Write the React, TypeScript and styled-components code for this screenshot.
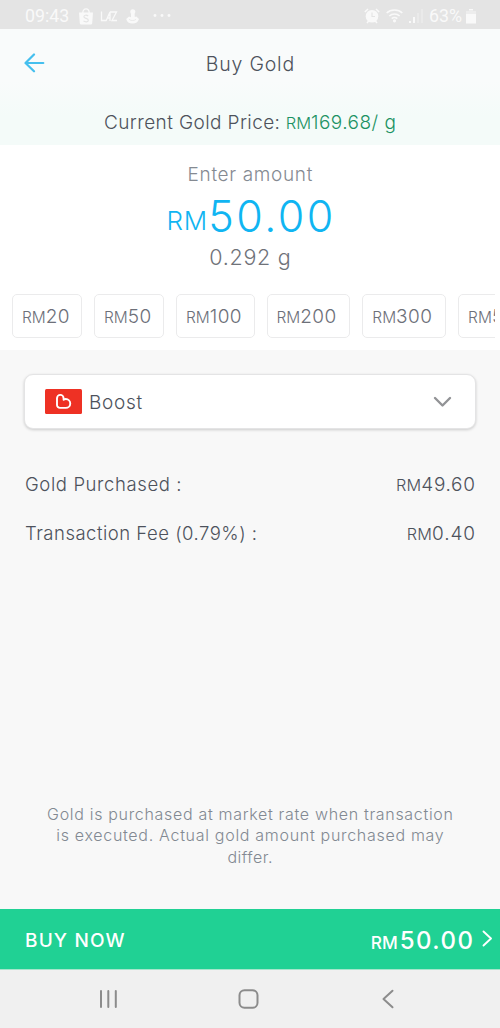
import React from "react";
import styled, { createGlobalStyle } from "styled-components";

const GlobalStyle = createGlobalStyle`
  * { box-sizing: border-box; }
  body {
    margin: 0;
    background: #f8f8f8;
    font-family: Inter, "Liberation Sans", sans-serif;
    color: #4d525c;
  }
  button { font: inherit; color: inherit; padding: 0; }
`;

const Screen = styled.div`
  width: 500px;
  height: 1028px;
  display: flex;
  flex-direction: column;
  overflow: hidden;
  background: #f8f8f8;
`;

const StatusBar = styled.div`
  height: 29px;
  flex: none;
  display: flex;
  align-items: center;
  justify-content: space-between;
  padding: 3px 24px 0 25px;
  background: #e4e4e4;
  color: #f9f9f9;
  font-family: Roboto, sans-serif;
  font-size: 17.8px;
  line-height: 26px;
`;

const StatusGroup = styled.div`
  display: flex;
  align-items: center;
`;

const StatusIcon = styled.svg<{ $gap: number }>`
  display: block;
  margin-left: ${(p) => p.$gap}px;
`;

const Header = styled.header`
  height: 116px;
  flex: none;
  background: linear-gradient(#f9fbfb, #f9fbfb 45%, #f4fbf9 75%);
`;

const TitleBar = styled.div`
  height: 70px;
  display: grid;
  grid-template-columns: 60px 1fr 60px;
  align-items: center;
`;

const BackButton = styled.button`
  border: 0;
  background: none;
  height: 40px;
  padding: 0 0 2px 24px;
  display: flex;
  align-items: center;
`;

const Txt = styled.span<{ $size: number; $track?: number; $weight?: number; $color?: string }>`
  font-size: ${(p) => p.$size}px;
  letter-spacing: ${(p) => p.$track ?? 0}px;
  margin-right: ${(p) => -(p.$track ?? 0)}px;
  font-weight: ${(p) => p.$weight ?? 300};
  color: ${(p) => p.$color ?? "inherit"};
  white-space: pre;
`;

const Title = styled.h1`
  margin: 0;
  padding-top: 1px;
  text-align: center;
  font-size: 19px;
  line-height: 26px;
  font-weight: 300;
`;

const PriceLine = styled.div`
  display: flex;
  align-items: baseline;
  padding-left: 104px;
  height: 46px;
  line-height: 48px;
`;

const MoneyRow = styled.span<{ $gap?: number; $color?: string; $raise?: number }>`
  display: inline-flex;
  align-items: baseline;
  gap: ${(p) => p.$gap ?? 0}px;
  color: ${(p) => p.$color ?? "inherit"};

  & > :first-child { padding-bottom: 0; margin-bottom: ${(p) => p.$raise ?? 0}px; transform: translateY(${(p) => -(p.$raise ?? 0)}px); }
`;

const AmountPanel = styled.section`
  height: 205px;
  flex: none;
  background: #fff;
  display: flex;
  flex-direction: column;
  align-items: center;
`;

const AmountLine = styled.div<{ $height: number; $top: number }>`
  height: ${(p) => p.$height}px;
  line-height: ${(p) => p.$height}px;
  margin-top: ${(p) => p.$top}px;
  flex: none;
`;

const ChipStrip = styled.div`
  width: 495px;
  align-self: flex-start;
  margin-top: 22px;
  padding-left: 12px;
  display: flex;
  gap: 12px;
  overflow: hidden;
`;

const Chip = styled.button<{ $width: number }>`
  flex: none;
  width: ${(p) => p.$width}px;
  height: 44px;
  border: 1px solid #ebebec;
  border-radius: 5px;
  background: #fff;
  color: #6d7079;
  padding-left: 9px;
  text-align: left;
  line-height: 44px;
`;

const Body = styled.main`
  flex: 1;
  display: flex;
  flex-direction: column;
  padding: 24px 24px 0;
`;

const WalletSelect = styled.button`
  height: 55px;
  flex: none;
  border: 1px solid #e4e4e5;
  border-radius: 9px;
  background: #fff;
  box-shadow: 0 1px 3px rgba(0, 0, 0, 0.18);
  display: flex;
  align-items: center;
  padding: 0 23.5px 0 20px;
`;

const WalletName = styled.span`
  flex: 1;
  text-align: left;
  padding: 2px 0 0 7px;
  line-height: 26px;
`;

const Details = styled.dl`
  margin: 31px 0 0;
  padding: 0 1px;
`;

const DetailRow = styled.div`
  height: 49px;
  line-height: 49px;
  display: flex;
  align-items: baseline;
  justify-content: space-between;
`;

const Term = styled.dt`
  margin: 0;
`;

const Value = styled.dd`
  margin: 0;
`;

const Note = styled.p`
  margin: auto 0 41px;
  line-height: 21.5px;
  color: #828992;
  display: flex;
  flex-direction: column;
  align-items: center;
`;

const BuyBar = styled.button`
  height: 61px;
  flex: none;
  border: 0;
  border-bottom: 1px solid #a6e6cc;
  background: #20d194;
  color: #fff;
  display: flex;
  align-items: center;
  justify-content: space-between;
  padding: 2px 7px 0 25px;
`;

const BuyTotal = styled.span`
  display: flex;
  align-items: center;
  gap: 9px;

  & > svg { margin-bottom: 4px; }
`;

const NavBar = styled.nav`
  height: 58px;
  flex: none;
  background: #f0f0f0;
  display: grid;
  grid-template-columns: 139.5px 144.5px auto;
  align-items: center;
  padding: 0 0 0 98px;
`;

type MoneyProps = {
  value: string;
  size: number;
  unit: number;
  track?: number;
  unitTrack?: number;
  weight?: number;
  color?: string;
  gap?: number;
  raise?: number;
};

function Money({ value, size, unit, track = 0, unitTrack = 0, weight, color, gap, raise }: MoneyProps) {
  return (
    <MoneyRow $gap={gap} $color={color} $raise={raise}>
      <Txt $size={unit} $track={unitTrack} $weight={weight}>RM</Txt>
      <Txt $size={size} $track={track} $weight={weight}>{value}</Txt>
    </MoneyRow>
  );
}

const chips = [
  { value: "20", width: 70 },
  { value: "50", width: 70 },
  { value: "100", width: 78.5 },
  { value: "200", width: 83.8 },
  { value: "300", width: 83.8 },
  { value: "500", width: 83.8 },
];

export default function App() {
  return (
    <Screen>
      <GlobalStyle />
      <StatusBar>
        <StatusGroup>
          <span>09:43</span>
          <StatusIcon $gap={9} width="16" height="17" viewBox="0 0 16 17">
            <path d="M1 4.5h14l-.8 10.8a1.3 1.3 0 0 1-1.3 1.2H3.100a1.300 1.300 0 0 1-1.300-1.200z" fill="#f9f9f9" />
            <path d="M4.800 5C4.800-.6 11.200-.6 11.200 5" fill="none" stroke="#f9f9f9" strokeWidth="1.300" />
            <path d="M10.200 8C8.500 6.700 5.900 7 5.900 8.700c0 2 4.400 1.300 4.400 3.500 0 1.900-3 2.200-4.800.7" fill="none" stroke="#e4e4e4" strokeWidth="1.200" />
          </StatusIcon>
          <StatusIcon $gap={6} width="18" height="11" viewBox="0 0 18 11" fill="none" stroke="#f9f9f9" strokeWidth="1.300">
            <path d="M1.500 .5v9H6M6 10 10 1v9M7.500 7h2.500M10 1h6.500L12 9.500h5" />
          </StatusIcon>
          <StatusIcon $gap={8} width="13" height="15" viewBox="0 0 13 15">
            <circle cx="6.800" cy="2.800" r="2.500" fill="#f9f9f9" />
            <path d="M5 4.500h3.600L8.800 8l1.600-.5L13 10c-1 3-3 4.500-6.500 4.500S1 13 .2 10L3 7.500l2 .7z" fill="#f9f9f9" />
            <path d="M3 10.300c1.500 1.500 5 1.700 7 .1" stroke="#e4e4e4" strokeWidth=".8" fill="none" />
          </StatusIcon>
          <StatusIcon $gap={14} width="18" height="4" viewBox="0 0 18 4" fill="#f9f9f9">
            <circle cx="2" cy="1.500" r="1.400" /><circle cx="9" cy="1.500" r="1.400" /><circle cx="16" cy="1.500" r="1.400" />
          </StatusIcon>
        </StatusGroup>
        <StatusGroup>
          <StatusIcon $gap={0} width="16" height="16" viewBox="0 0 16 16" stroke="#f9f9f9" fill="none">
            <circle cx="8" cy="8.200" r="6.300" fill="#f9f9f9" stroke="none" />
            <path d="M.8 4 4 1M15.200 4 12 1M3 15l2-2.500M13 15l-2-2.500" strokeWidth="1.500" />
            <path d="M8 4.500v4h3" stroke="#e4e4e4" strokeWidth="1.200" />
          </StatusIcon>
          <StatusIcon $gap={6} width="17" height="15" viewBox="0 0 17 15" stroke="#f9f9f9" fill="none" strokeWidth="1.600">
            <path d="M.7 4c4-4 11.600-4 15.600 0M3.300 7c3-2.700 7.400-2.700 10.400 0M5.700 9.600c1.500-1.300 4.100-1.300 5.600 0" />
            <circle cx="8.500" cy="11.800" r=".8" fill="#f9f9f9" />
          </StatusIcon>
          <StatusIcon $gap={5} width="15" height="14" viewBox="0 0 15 14" fill="#f9f9f9">
            <path d="M1 12h2v2H1zM5 8h2v6H5z" />
            <path d="M9 4h2v10H9zM13 0h2v14h-2z" opacity=".3" />
          </StatusIcon>
          <StatusIcon as="span" $gap={6}>63%</StatusIcon>
          <StatusIcon $gap={4} width="10" height="15" viewBox="0 0 10 15" fill="#f9f9f9">
            <path d="M3 0h4v2h3v12.500H0V2h3z" />
            <path d="M0 1h10v4H0z" fill="#e4e4e4" opacity=".6" />
          </StatusIcon>
        </StatusGroup>
      </StatusBar>

      <Header>
        <TitleBar>
          <BackButton aria-label="Back">
            <svg width="21" height="20" viewBox="0 0 21 20" fill="none" stroke="#45bfee" strokeWidth="2.200" strokeLinecap="round" strokeLinejoin="round">
              <path d="M10 1.500 1.500 10l8.500 8.300M2 10h17.300" />
            </svg>
          </BackButton>
          <Title><Txt $size={19.500} $track={0.8}>Buy Gold</Txt></Title>
        </TitleBar>
        <PriceLine>
          <Txt $size={19} $track={0.4}>{"Current Gold Price: "}</Txt>
          <Money value="169.68/ g" size={19} unit={16.5} track={0.45} color="#1b9263" />
        </PriceLine>
      </Header>

      <AmountPanel>
        <AmountLine $height={26} $top={17}>
          <Txt $size={19} $track={0.66} $color="#858a92">Enter amount</Txt>
        </AmountLine>
        <AmountLine $height={50} $top={3}>
          <Money value="50.00" size={43} unit={26} track={2.500} unitTrack={0.8} gap={1} raise={2} color="#10b5f2" />
        </AmountLine>
        <AmountLine $height={30} $top={1}>
          <Txt $size={21.500} $track={0.7} $color="#6f7279">0.292 g</Txt>
        </AmountLine>
        <ChipStrip>
          {chips.map((c) => (
            <Chip key={c.value} $width={c.width}>
              <Money value={c.value} size={19} unit={15.500} track={0.4} />
            </Chip>
          ))}
        </ChipStrip>
      </AmountPanel>

      <Body>
        <WalletSelect>
          <svg width="37" height="25" viewBox="0 0 37 25">
            <rect width="37" height="25" rx="1.500" fill="#ee3124" />
            <path d="M12 9.200a3.300 3.300 0 0 1 6.600 0v1.500c.6-.5 1.300-.7 2.200-.7a4.400 4.400 0 0 1 0 8.900H15a3 3 0 0 1-3-3z" fill="none" stroke="#fff" strokeWidth="1.900" strokeLinejoin="round" />
          </svg>
          <WalletName><Txt $size={19} $track={0.7}>Boost</Txt></WalletName>
          <svg width="19" height="12" viewBox="0 0 19 12" fill="none" stroke="#929396" strokeWidth="2.400" strokeLinecap="round" strokeLinejoin="round">
            <path d="m2 2 7.500 7.500L17 2" />
          </svg>
        </WalletSelect>

        <Details>
          <DetailRow>
            <Term><Txt $size={18.500} $track={0.6}>Gold Purchased :</Txt></Term>
            <Value><Money value="49.60" size={19} unit={16.300} track={0.7} unitTrack={0.3} /></Value>
          </DetailRow>
          <DetailRow>
            <Term><Txt $size={18.500} $track={0.5}>Transaction Fee (0.79%) :</Txt></Term>
            <Value><Money value="0.40" size={19} unit={16.300} track={0.9} unitTrack={0.3} /></Value>
          </DetailRow>
        </Details>

        <Note>
          <Txt $size={16} $track={0.68}>Gold is purchased at market rate when transaction</Txt>
          <Txt $size={16} $track={0.7}>is executed. Actual gold amount purchased may</Txt>
          <Txt $size={16} $track={0.5}>differ.</Txt>
        </Note>
      </Body>

      <BuyBar>
        <Txt $size={19} $track={1.150} $weight={500}>BUY NOW</Txt>
        <BuyTotal>
          <Money value="50.00" size={24} unit={17.300} track={1.500} weight={500} gap={2} />
          <svg width="11" height="17" viewBox="0 0 11 17" fill="none" stroke="#fff" strokeWidth="1.900" strokeLinecap="round" strokeLinejoin="round">
            <path d="m1.500 1.500 7.500 7-7.500 7" />
          </svg>
        </BuyTotal>
      </BuyBar>

      <NavBar>
        <svg width="20" height="20" viewBox="0 0 20 20" stroke="#8c8c8c" strokeWidth="2" strokeLinecap="round">
          <path d="M3 2v16M10.300 2v16M17.800 2v16" />
        </svg>
        <svg width="21" height="20" viewBox="0 0 21 20" fill="none" stroke="#8c8c8c" strokeWidth="2">
          <rect x="1.500" y="1.200" width="18" height="17.600" rx="5" />
        </svg>
        <svg width="13" height="20" viewBox="0 0 13 20" fill="none" stroke="#8c8c8c" strokeWidth="2" strokeLinecap="round" strokeLinejoin="round">
          <path d="m10.500 1.700-9 8.300 9 8.300" />
        </svg>
      </NavBar>
    </Screen>
  );
}
